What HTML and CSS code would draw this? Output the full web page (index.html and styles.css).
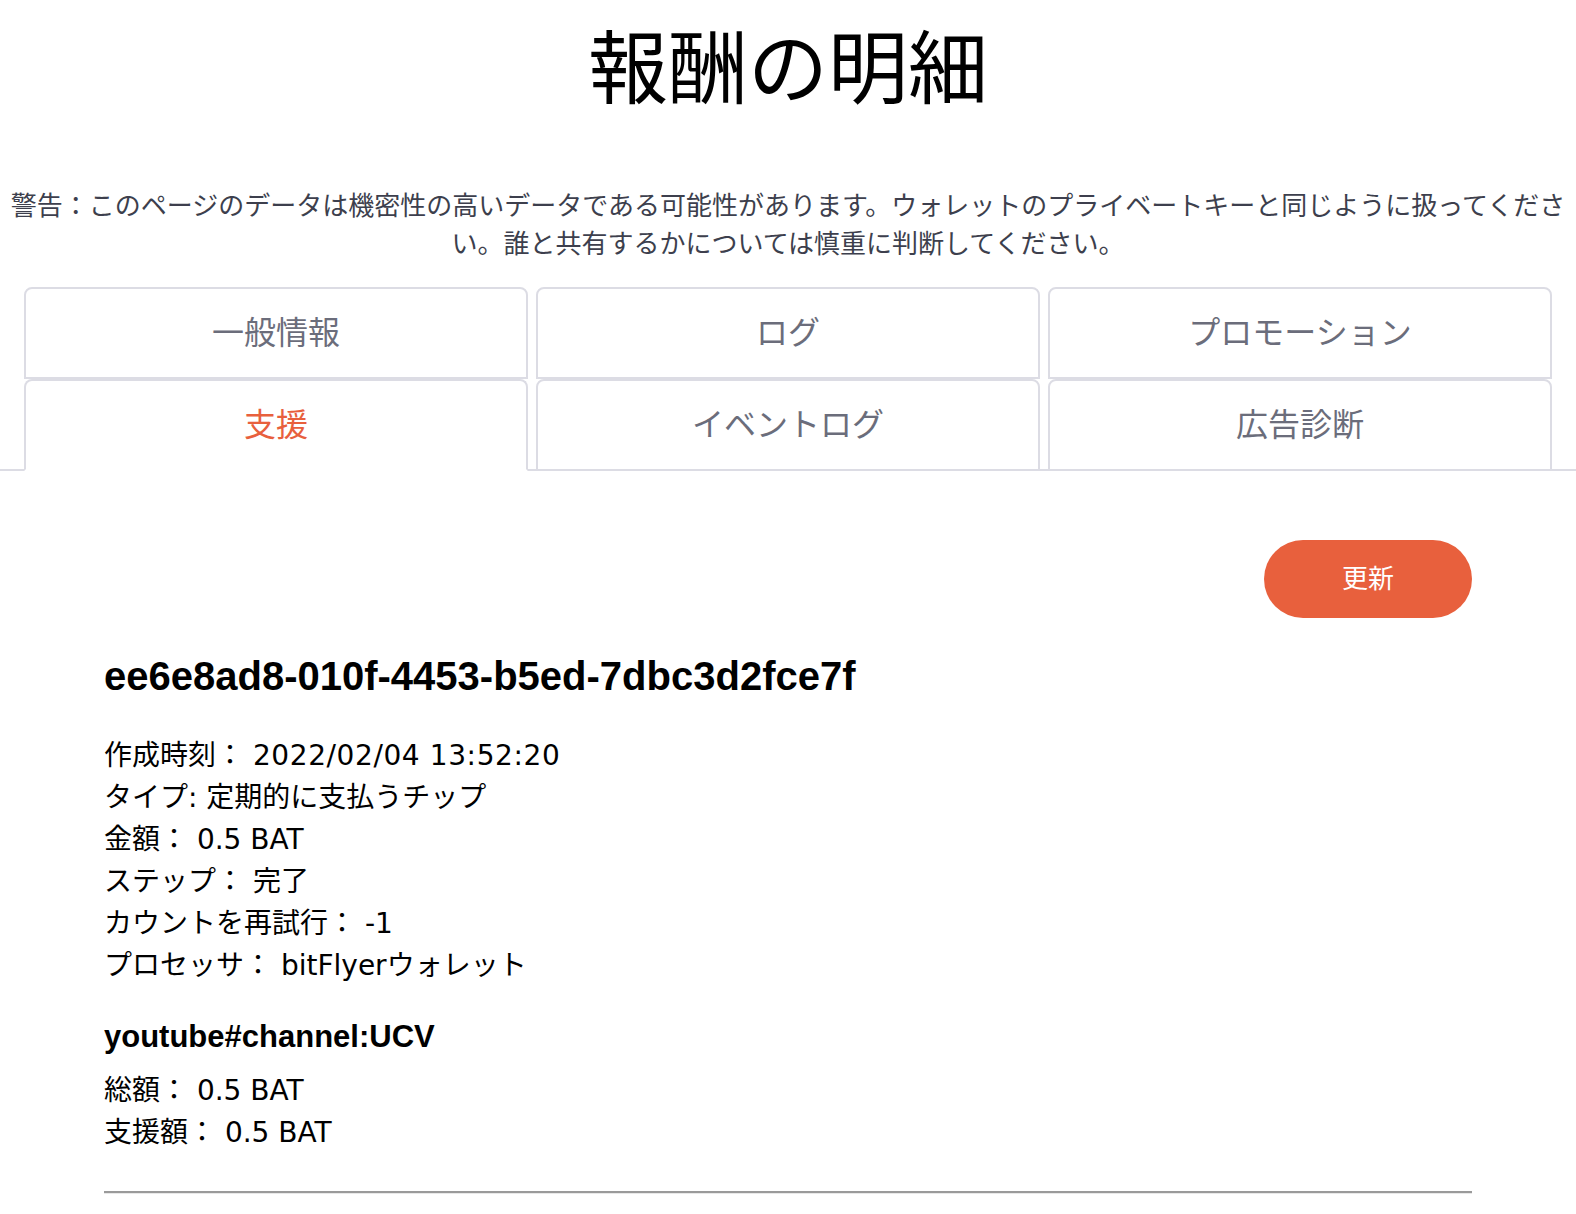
FILE: index.html
```html
<!DOCTYPE html>
<html lang="ja">
<head>
<meta charset="utf-8">
<title>報酬の明細</title>
<link rel="stylesheet" href="styles.css">
</head>
<body>
  <h1 class="page-title">報酬の明細</h1>
  <p class="warning">警告：このページのデータは機密性の高いデータである可能性があります。ウォレットのプライベートキーと同じように扱ってください。誰と共有するかについては慎重に判断してください。</p>
  <div class="tabs">
    <div class="tab">一般情報</div>
    <div class="tab">ログ</div>
    <div class="tab">プロモーション</div>
    <div class="tab tab-row2 active">支援</div>
    <div class="tab tab-row2">イベントログ</div>
    <div class="tab tab-row2">広告診断</div>
  </div>
  <main class="content">
    <div class="actions">
      <button class="refresh">更新</button>
    </div>
    <h2 class="contribution-id">ee6e8ad8-010f-4453-b5ed-7dbc3d2fce7f</h2>
    <div class="fields">
      <div>作成時刻： <span class="stamp">2022/02/04 13:52:20</span></div>
      <div>タイプ: 定期的に支払うチップ</div>
      <div>金額： 0.5 BAT</div>
      <div>ステップ： 完了</div>
      <div>カウントを再試行： -1</div>
      <div>プロセッサ： bitFlyerウォレット</div>
    </div>
    <h3 class="publisher">youtube#channel:UCV</h3>
    <div class="fields fields-publisher">
      <div>総額： 0.5 BAT</div>
      <div>支援額： 0.5 BAT</div>
    </div>
    <div class="divider"></div>
  </main>
</body>
</html>
```

FILE: styles.css
```css
html, body {
  margin: 0;
  padding: 0;
  background: #ffffff;
}

body {
  font-family: "Noto Sans CJK JP", sans-serif;
  color: #000;
}

.page-title {
  margin: 0;
  padding-top: 14px;
  font-size: 80px;
  line-height: 96px;
  font-weight: 400;
  text-align: center;
  color: #000;
}

.warning {
  margin: 75px 0 0;
  padding: 0 6px;
  font-size: 26px;
  line-height: 38px;
  text-align: center;
  color: #3d3f4d;
}

.tabs {
  margin-top: 26px;
  padding: 0 24px;
  display: grid;
  grid-template-columns: repeat(3, 1fr);
  column-gap: 8px;
  border-bottom: 2px solid #dcdce4;
}

.tab {
  height: 82px;
  box-sizing: content-box;
  padding-bottom: 6px;
  border: 2px solid #dcdce4;
  border-radius: 8px 8px 0 0;
  display: flex;
  align-items: center;
  justify-content: center;
  font-size: 32px;
  line-height: 1;
  color: #6b6d7b;
  background: #fff;
}

.tab-row2 {
  margin-bottom: -2px;
}

.tab.active {
  color: #e8603d;
  border-bottom-color: #fff;
}

.content {
  padding: 0 104px;
  font-family: "DejaVu Sans", "Noto Sans CJK JP", sans-serif;
}

.actions {
  display: flex;
  justify-content: flex-end;
  padding-top: 69px;
}

.refresh {
  width: 208px;
  height: 78px;
  padding: 0 0 6px;
  border: none;
  border-radius: 39px;
  background: #e8603d;
  color: #fff;
  font-family: "Noto Sans CJK JP", sans-serif;
  font-size: 26px;
}

.contribution-id {
  margin: 34px 0 0;
  font-family: "Liberation Sans", "Noto Sans CJK JP", sans-serif;
  font-size: 40px;
  line-height: 48px;
  font-weight: 700;
}

.fields {
  font-size: 28px;
  line-height: 42px;
}

.stamp {
  letter-spacing: 0.6px;
}

.contribution-id + .fields {
  margin-top: 35px;
}

.publisher {
  margin: 30px 0 0;
  font-family: "Liberation Sans", "Noto Sans CJK JP", sans-serif;
  font-size: 31px;
  line-height: 40px;
  font-weight: 700;
}

.fields-publisher {
  margin-top: 13px;
}

.divider {
  margin-top: 37px;
  border-top: 2px solid #9a9a9a;
  border-bottom: 1px solid #e8e8e8;
}
```
